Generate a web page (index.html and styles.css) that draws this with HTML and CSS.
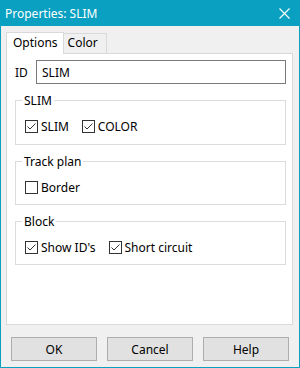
FILE: index.html
```html
<!DOCTYPE html>
<html>
<head>
  <title>Properties: SLIM</title>
  <link rel="stylesheet" href="styles.css">
</head>
<body>
  <div class="window">
    <div class="titlebar">
      <span class="title">Properties: SLIM</span>
      <svg class="close" width="11" height="11" viewBox="0 0 11 11">
        <path d="M0.5 0.5 L10.5 10.5 M10.5 0.5 L0.5 10.5" stroke="#fff" stroke-width="1.1" fill="none"/>
      </svg>
    </div>

    <div class="tabs">
      <div class="tab active">Options</div>
      <div class="tab">Color</div>
    </div>

    <div class="panel">
      <div class="id-row">
        <label for="slim-id">ID</label>
        <input type="text" id="slim-id" value="SLIM">
      </div>

      <fieldset class="group first">
        <legend>SLIM</legend>
        <div class="checks">
          <span class="check on">SLIM</span>
          <span class="check on">COLOR</span>
        </div>
      </fieldset>

      <fieldset class="group">
        <legend>Track plan</legend>
        <div class="checks">
          <span class="check">Border</span>
        </div>
      </fieldset>

      <fieldset class="group">
        <legend>Block</legend>
        <div class="checks">
          <span class="check on">Show ID's</span>
          <span class="check on">Short circuit</span>
        </div>
      </fieldset>
    </div>

    <div class="buttons">
      <button>OK</button>
      <button>Cancel</button>
      <button>Help</button>
    </div>
  </div>
</body>
</html>
```

FILE: styles.css
```css
body {
  margin: 0;
  font-family: "Noto Sans", "Open Sans", sans-serif;
  font-size: 12px;
  color: #000;
}

.window {
  width: 300px;
  height: 368px;
  box-sizing: border-box;
  border: 1px solid #0aa0c2;
  background-color: #f0f0f0;
  display: flex;
  flex-direction: column;
}

.titlebar {
  height: 25px;
  flex: none;
  background-color: #0aa0c2;
  color: #fff;
  display: flex;
  align-items: center;
  justify-content: space-between;
  padding: 0 9px 0 4px;
}

.title {
  font-size: 12px;
}

.close {
  display: block;
}

.tabs {
  display: flex;
  align-items: flex-end;
  margin: 6px 0 0 5px;
  height: 21px;
  flex: none;
}

.tab {
  height: 20px;
  box-sizing: border-box;
  line-height: 18px;
  padding: 0 8px 0 4px;
  border: 1px solid #d9d9d9;
  border-bottom: none;
  border-left: none;
}

.tab.active {
  height: 22px;
  line-height: 20px;
  padding: 0 5px 0 6px;
  background-color: #fff;
  border-left: 1px solid #d9d9d9;
  margin-bottom: -1px;
  position: relative;
  z-index: 1;
}

.panel {
  flex: 1;
  margin: 0 6px 0 5px;
  border: 1px solid #d9d9d9;
  background-color: #fff;
  padding: 6px 6px 0 8px;
}

.id-row {
  display: flex;
  align-items: center;
}

.id-row label {
  width: 21px;
}

.id-row input {
  flex: 1;
  height: 24px;
  box-sizing: border-box;
  border: 1px solid #7a7a7a;
  padding: 0 5px;
  font-family: inherit;
  font-size: 12px;
  color: #000;
  outline: none;
}

.group {
  margin: 8px 0 0 0;
  padding: 0 9px 9px 9px;
  border: 1px solid #dcdcdc;
  min-width: 0;
}

.group.first {
  margin-top: 8px;
  padding-bottom: 10px;
}

.group legend {
  padding: 0 2px;
  margin-left: -3px;
  line-height: 17px;
}

.checks {
  display: flex;
  gap: 13px;
  margin-top: 10px;
}

.check {
  display: flex;
  align-items: center;
  gap: 3px;
  line-height: 15px;
}

.check::before {
  content: "";
  width: 13px;
  height: 13px;
  box-sizing: border-box;
  border: 1px solid #333;
  background-color: #fff;
}

.check.on::before {
  background-image: url("data:image/svg+xml;utf8,<svg xmlns='http://www.w3.org/2000/svg' width='11' height='11' viewBox='0 0 11 11'><path d='M1.5 5.5 L4 8 L9.5 2.5' stroke='%23333' stroke-width='1' fill='none'/></svg>");
  background-repeat: no-repeat;
}

.buttons {
  display: flex;
  gap: 10px;
  padding: 12px 0 6px 10px;
  flex: none;
}

.buttons button {
  width: 86px;
  height: 24px;
  background-color: #e1e1e1;
  border: 1px solid #adadad;
  font-family: inherit;
  font-size: 12px;
  color: #000;
  padding: 0;
}
```
